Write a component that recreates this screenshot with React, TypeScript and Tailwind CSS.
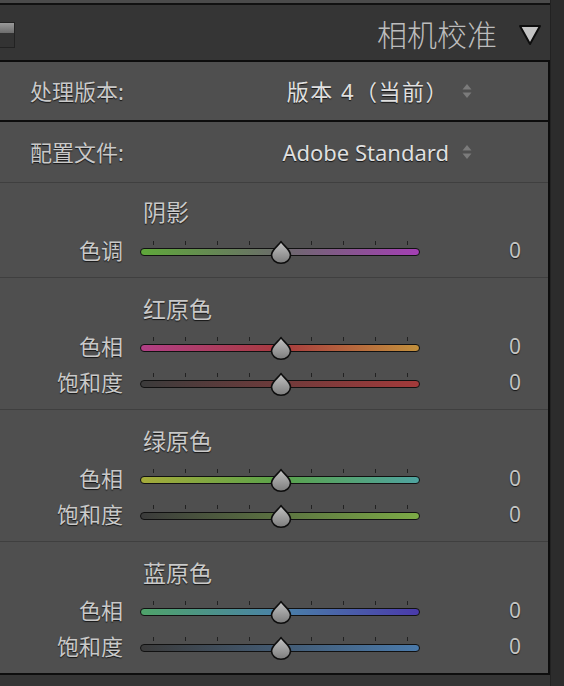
import React from "react";

const FONT = { fontFamily: '"Noto Sans", "Noto Sans CJK SC", sans-serif' };

function Thumb() {
  return (
    <svg width="24" height="24" viewBox="0 0 24 24" className="absolute left-[129px] top-[8px]">
      <defs>
        <linearGradient id="tg" x1="0" y1="0" x2="0" y2="1">
          <stop offset="0" stopColor="#c4c4c4" />
          <stop offset="1" stopColor="#7c7c7c" />
        </linearGradient>
      </defs>
      <path
        d="M12 1.5 C13.6 4.8 21.5 9.5 21.5 15 A9.5 8.2 0 0 1 2.5 15 C2.5 9.5 10.4 4.8 12 1.5 Z"
        fill="url(#tg)"
        stroke="#0d0d0d"
        strokeWidth="1.6"
        strokeLinejoin="round"
      />
    </svg>
  );
}

const TICKS = [13, 45, 77, 109, 171, 203, 235, 267];

function Slider({ label, gradient }: { label: string; gradient: string }) {
  return (
    <div className="flex h-[36px] items-center">
      <div className="w-[123px] text-right text-[22px] leading-none text-[#c9c9c9] [text-shadow:0_1px_1px_rgba(0,0,0,0.75)]">
        {label}
      </div>
      <div className="relative ml-[17px] h-[36px] w-[280px]">
        {TICKS.map((t) => (
          <div key={t} className="absolute top-[9px] h-[4px] w-px bg-[#222]" style={{ left: t }} />
        ))}
        <div className="absolute left-0 top-[16px] h-[8px] w-[280px] rounded-full border-[1.5px] border-[#111]" style={{ background: gradient }} />
        <Thumb />
      </div>
      <div className="flex-1 pr-[27px] text-right text-[21px] leading-none text-[#c4c4c4] [text-shadow:0_1px_1px_rgba(0,0,0,0.75)]">
        0
      </div>
    </div>
  );
}

function Section({
  title,
  rows,
  pt,
  gap,
}: {
  title: string;
  rows: { label: string; gradient: string }[];
  pt: string;
  gap: string;
}) {
  return (
    <div className={`border-t border-[#3f3f3f] pb-[9px] ${pt}`}>
      <div className="flex h-[28px] items-center pl-[143px] text-[23px] leading-none text-[#c9c9c9] [text-shadow:0_1px_1px_rgba(0,0,0,0.75)]">
        {title}
      </div>
      <div className={gap}>
        {rows.map((r) => (
          <Slider key={r.label + r.gradient} label={r.label} gradient={r.gradient} />
        ))}
      </div>
    </div>
  );
}

function Stepper() {
  return (
    <svg width="10" height="16" viewBox="0 0 10 16" className="ml-[13px]">
      <path d="M5 1 L9.5 6.5 L0.5 6.5 Z" fill="#7b7b7b" />
      <path d="M5 15 L9.5 9.5 L0.5 9.5 Z" fill="#7b7b7b" />
    </svg>
  );
}

export default function App() {
  return (
    <div className="flex h-[686px] w-[564px] overflow-hidden bg-[#2c2c2c]" style={FONT}>
      <div className="flex w-[551px] flex-col border-r border-[#222] bg-[#353535]">
        <div className="h-[5px] w-[550px] border-b-2 border-[#111] bg-[#4b4b4b]" />
        <div className="flex h-[55px] items-center pt-[4px]">
          <div className="flex h-[26px] w-[15px] flex-col border border-l-0 border-[#222]">
            <div className="h-[10px] bg-gradient-to-b from-[#9a9a9a] to-[#6c6c6c]" />
            <div className="flex-1 bg-[#333]" />
          </div>
          <div className="ml-auto text-[30px] font-light leading-none text-[#bdbdbd]">相机校准</div>
          <svg width="24" height="22" viewBox="0 0 24 22" className="ml-[21px] mr-[8px]">
            <path d="M2 2 L22 2 L12 20 Z" fill="#c4c4c4" stroke="#0d0d0d" strokeWidth="2" strokeLinejoin="round" />
          </svg>
        </div>
        <div className="w-[550px] border-y-2 border-r-2 border-[#0d0d0d] bg-[#4f4f4f]">
          <div className="flex h-[60px] items-center border-b-2 border-[#0d0d0d] pl-[30px] pr-[76px] text-[22px] leading-none [text-shadow:0_1px_1px_rgba(0,0,0,0.75)]">
            <span className="text-[#c9c9c9]">处理版本:</span>
            <span className="ml-auto tracking-[1.5px] text-[#e0e0e0]">版本 4（当前）</span>
            <Stepper />
          </div>
          <div className="flex h-[60px] items-center pl-[30px] pr-[76px] text-[22px] leading-none [text-shadow:0_1px_1px_rgba(0,0,0,0.75)]">
            <span className="text-[#c9c9c9]">配置文件:</span>
            <span className="ml-auto text-[#e0e0e0]">Adobe Standard</span>
            <Stepper />
          </div>
          <Section
            title="阴影"
            pt="pt-[15px]"
            gap="mt-[6px]"
            rows={[{ label: "色调", gradient: "linear-gradient(to right,#5fa83a,#6b6b6b 50%,#a43fb4)" }]}
          />
          <Section
            title="红原色"
            pt="pt-[17px]"
            gap="mt-[5px]"
            rows={[
              { label: "色相", gradient: "linear-gradient(to right,#b23f86,#a83a3e 50%,#c2903c)" },
              { label: "饱和度", gradient: "linear-gradient(to right,#3b3b3b,#a33a3a)" },
            ]}
          />
          <Section
            title="绿原色"
            pt="pt-[17px]"
            gap="mt-[5px]"
            rows={[
              { label: "色相", gradient: "linear-gradient(to right,#a5ab3a,#5aa34a 50%,#4fa3a0)" },
              { label: "饱和度", gradient: "linear-gradient(to right,#3b3b3b,#7cab46)" },
            ]}
          />
          <Section
            title="蓝原色"
            pt="pt-[17px]"
            gap="mt-[5px]"
            rows={[
              { label: "色相", gradient: "linear-gradient(to right,#4fa36a,#4a82a8 50%,#4a3aab)" },
              { label: "饱和度", gradient: "linear-gradient(to right,#3b3b3b,#4a7aab)" },
            ]}
          />
        </div>
      </div>
    </div>
  );
}
